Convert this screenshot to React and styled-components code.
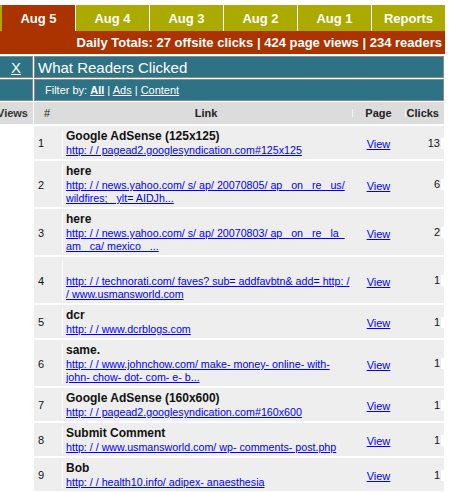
import React from "react";
import styled, { createGlobalStyle } from "styled-components";

const GlobalStyle = createGlobalStyle`
  body {
    margin: 0;
    background: #fff;
    font-family: "Liberation Sans", Arial, sans-serif;
  }
`;

const COLS = "26px 292px 53px 39px";

const Page = styled.div`
  width: 446px;
  padding-top: 5px;
`;

const TabBar = styled.div`
  display: flex;
  background: #aaaa00;
  padding-left: 2px;
`;

const Tab = styled.div`
  width: 73px;
  height: 26px;
  flex-shrink: 0;
  border-right: 1px solid #fff;
  background: ${(p) => (p.$active ? "#aa3300" : "#aaaa00")};
  color: #fff;
  font-weight: bold;
  font-size: 13px;
  display: flex;
  align-items: center;
  justify-content: center;
`;

const Totals = styled.div`
  background: #aa3300;
  color: #fff;
  font-weight: bold;
  font-size: 13px;
  height: 23px;
  width: 445px;
  box-sizing: border-box;
  display: flex;
  align-items: center;
  justify-content: flex-end;
  padding-right: 3px;
  white-space: nowrap;
`;

const Board = styled.div`
  margin-top: 2px;
  display: grid;
  grid-template-columns: 33px 410px;
  gap: 1px;
  align-items: start;
`;

const TealCell = styled.div`
  height: 22px;
  box-sizing: border-box;
  background: #2e7285;
  border: 1px solid #8a8a8a;
  border-left: ${(p) => (p.$edge ? "none" : "1px solid #8a8a8a")};
  color: #fff;
  display: flex;
  align-items: center;
  justify-content: ${(p) => (p.$center ? "center" : "flex-start")};
  padding-left: ${(p) => p.$pad || 0}px;
`;

const CloseLink = styled.a`
  color: #fff;
  font-size: 15px;
  text-decoration: underline;
`;

const Heading = styled.span`
  font-size: 15px;
`;

const Filter = styled.div`
  font-size: 11px;
  color: #fff;
  white-space: pre;
  a {
    color: #fff;
    text-decoration: underline;
  }
  b {
    font-weight: bold;
  }
`;

const ViewsHead = styled.div`
  height: 22px;
  background: #dcdcdc;
  display: flex;
  align-items: center;
  justify-content: flex-end;
  padding-right: 5px;
  overflow: hidden;
  font-size: 11px;
  font-weight: bold;
  color: #333;
  white-space: nowrap;
`;

const Table = styled.div`
  display: flex;
  flex-direction: column;
  gap: 2px;
`;

const HeadRow = styled.div`
  display: grid;
  grid-template-columns: ${COLS};
  height: 22px;
  background: #dcdcdc;
  align-items: stretch;
`;

const HeadCell = styled.div`
  display: flex;
  align-items: center;
  justify-content: ${(p) => p.$align || "center"};
  padding-right: ${(p) => p.$padRight || 0}px;
  font-size: 11px;
  font-weight: ${(p) => (p.$light ? "normal" : "bold")};
  color: #222;
  background: ${(p) =>
    p.$mark ? "linear-gradient(#f6f6f6, #f6f6f6) left center / 1px 8px no-repeat" : "none"};
`;

const Row = styled.div`
  display: grid;
  grid-template-columns: ${COLS};
  background: #eeeeee;
  align-items: center;
  padding: 3px 0 2px;
`;

const Num = styled.div`
  padding-left: 4px;
  font-size: 11px;
  color: #111;
`;

const LinkCell = styled.div`
  padding-left: 2px;
`;

const Title = styled.div`
  font-size: 12px;
  font-weight: bold;
  line-height: 15px;
  height: 15px;
  color: #111;
  border-left: 1px solid #fbfbfb;
  padding-left: 3px;
  white-space: nowrap;
`;

const UrlLine = styled.a`
  display: block;
  width: fit-content;
  font-size: 10.7px;
  line-height: 13px;
  color: #0000ff;
  text-decoration: underline;
  border-left: 1px solid #fbfbfb;
  padding-left: 3px;
  white-space: pre;
`;

const PageCell = styled.div`
  text-align: center;
  a {
    font-size: 11px;
    color: #0000ff;
    text-decoration: underline;
  }
`;

const ClickCell = styled.div`
  text-align: right;
  padding-right: 4px;
  font-size: 11px;
  line-height: 13px;
  color: #111;
  background: linear-gradient(#fff, #fff) right center / 3px 11px no-repeat;
`;

const tabs = ["Aug 5", "Aug 4", "Aug 3", "Aug 2", "Aug 1", "Reports"];

const rows = [
  { n: 1, title: "Google AdSense (125x125)", url: ["http: / / pagead2.googlesyndication.com#125x125"], clicks: 13 },
  {
    n: 2,
    title: "here",
    url: ["http: / / news.yahoo.com/ s/ ap/ 20070805/ ap   on   re   us/", "wildfires;   ylt= AIDJh..."],
    clicks: 6,
  },
  {
    n: 3,
    title: "here",
    url: ["http: / / news.yahoo.com/ s/ ap/ 20070803/ ap   on   re   la  ", "am   ca/ mexico   ..."],
    clicks: 2,
  },
  {
    n: 4,
    title: "",
    url: ["http: / / technorati.com/ faves? sub= addfavbtn& add= http: /", "/ www.usmansworld.com"],
    clicks: 1,
  },
  { n: 5, title: "dcr", url: ["http: / / www.dcrblogs.com"], clicks: 1 },
  {
    n: 6,
    title: "same.",
    url: ["http: / / www.johnchow.com/ make- money- online- with-", "john- chow- dot- com- e- b..."],
    clicks: 1,
  },
  { n: 7, title: "Google AdSense (160x600)", url: ["http: / / pagead2.googlesyndication.com#160x600"], clicks: 1 },
  { n: 8, title: "Submit Comment", url: ["http: / / www.usmansworld.com/ wp- comments- post.php"], clicks: 1 },
  { n: 9, title: "Bob", url: ["http: / / health10.info/ adipex- anaesthesia"], clicks: 1 },
];

const App = () => {
  return (
    <>
      <GlobalStyle />
      <Page>
        <TabBar>
          {tabs.map((t, i) => (
            <Tab key={t} $active={i === 0}>
              {t}
            </Tab>
          ))}
        </TabBar>
        <Totals>Daily Totals: 27 offsite clicks | 424 page views | 234 readers</Totals>
        <Board>
          <TealCell $edge $center>
            <CloseLink href="#">X</CloseLink>
          </TealCell>
          <TealCell $pad={3}>
            <Heading>What Readers Clicked</Heading>
          </TealCell>
          <TealCell $edge />
          <TealCell $pad={10}>
            <Filter>
              Filter by: <a href="#"><b>All</b></a> | <a href="#">Ads</a> | <a href="#">Content</a>
            </Filter>
          </TealCell>
          <ViewsHead>Views</ViewsHead>
          <Table>
            <HeadRow>
              <HeadCell $light>#</HeadCell>
              <HeadCell>Link</HeadCell>
              <HeadCell $mark>Page</HeadCell>
              <HeadCell $mark $align="flex-end" $padRight={5}>
                Clicks
              </HeadCell>
            </HeadRow>
            {rows.map((r) => (
              <Row key={r.n}>
                <Num>{r.n}</Num>
                <LinkCell>
                  <Title>{r.title}</Title>
                  {r.url.map((u, i) => (
                    <UrlLine key={i} href="#">
                      {u}
                    </UrlLine>
                  ))}
                </LinkCell>
                <PageCell>
                  <a href="#">View</a>
                </PageCell>
                <ClickCell>{r.clicks}</ClickCell>
              </Row>
            ))}
          </Table>
        </Board>
      </Page>
    </>
  );
};

export default App;
